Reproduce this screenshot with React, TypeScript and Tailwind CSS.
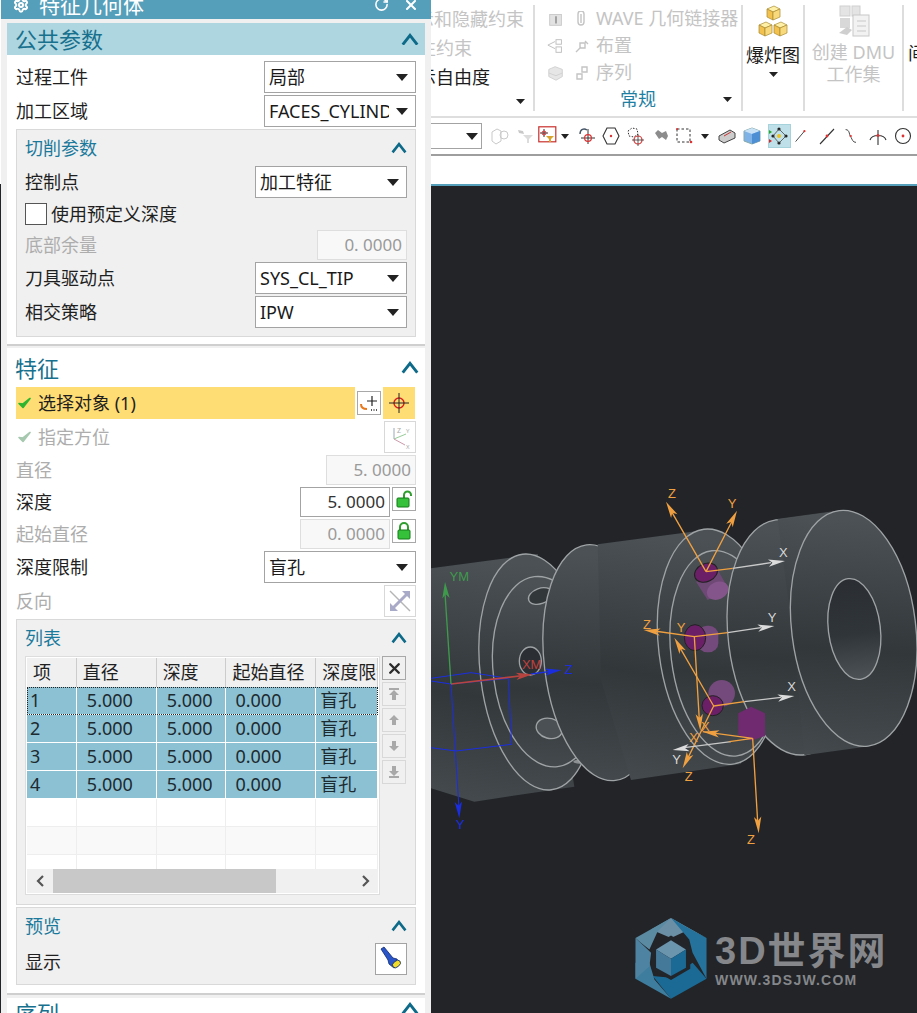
import React from "react";
import { Settings, RotateCw, X } from "lucide-react";

const Arrow = ({ c = "#222" }: { c?: string }) => (
  <svg width="12" height="7" viewBox="0 0 12 7" className="shrink-0"><polygon points="0,0 12,0 6,7" fill={c} /></svg>
);
const Chevron = ({ w = 18 }: { w?: number }) => (
  <svg width={w} height={w * 0.7} viewBox="0 0 18 13"><path d="M1.5 12 L9 2.5 L16.5 12" fill="none" stroke="#0d6a88" strokeWidth="3" /></svg>
);
const Select = ({ text, clip }: { text: string; clip?: boolean }) => (
  <div className="flex h-[32px] w-[152px] items-center justify-between border border-[#a3a3a3] bg-white pl-[4px] pr-[7px] text-[18px] text-[#1a1a1a]">
    <span className={clip ? "w-[120px] overflow-hidden whitespace-nowrap" : "whitespace-nowrap"}>{text}</span>
    <Arrow />
  </div>
);
const Num = ({ v, w, on }: { v: string; w: string; on?: boolean }) => (
  <div className={`flex h-[30px] items-center justify-end border pr-[4px] text-[17px] whitespace-nowrap ${w} ${on ? "border-[#a3a3a3] bg-white text-[#333]" : "border-[#dedede] bg-[#f8f8f8] text-[#9a9a9a]"}`}>{v}</div>
);
const Row = ({ label, dim, h = "h-[32px]", children }: { label: string; dim?: boolean; h?: string; children?: React.ReactNode }) => (
  <div className={`flex items-center justify-between ${h}`}>
    <span className={`text-[18px] ${dim ? "text-[#adadad]" : "text-[#1f1f1f]"}`}>{label}</span>
    {children}
  </div>
);
const Check = ({ c }: { c: string }) => (
  <svg width="13" height="12" viewBox="0 0 13 12"><path d="M1 6.5 L5 10.5 L12 1.5 L5 7 Z" fill={c} stroke={c} strokeWidth="1.6" strokeLinejoin="round" /></svg>
);
const Lock = ({ open }: { open?: boolean }) => (
  <svg width="16" height="18" viewBox="0 0 16 18">
    <path d={open ? "M8 8 V5 a3.5 3.5 0 0 1 7 0 V6" : "M4 8 V5 a4 4 0 0 1 8 0 V8"} fill="none" stroke="#2f9e2f" strokeWidth="2" />
    <rect x={open ? 1 : 2} y="8" width="12" height="9" rx="1" fill="#35c23a" stroke="#147a18" />
  </svg>
);
const Side = ({ d, dark }: { d?: string; dark?: boolean }) => (
  <div className={`flex h-[24px] w-[24px] items-center justify-center border ${dark ? "border-[#a8a8a8]" : "border-[#d8d8d8]"}`}>
    {dark ? <X size={17} strokeWidth={3.4} color="#2a2a2a" /> : <svg width="14" height="14" viewBox="0 0 14 14"><path d={d} fill="#a9a9a9" /></svg>}
  </div>
);

const cols = ["w-[50px]", "w-[80px]", "w-[70px]", "w-[90px]", "w-[62px]"];
const TableRow = ({ id, sel, first, alt }: { id?: string; sel?: boolean; first?: boolean; alt?: boolean }) => {
  const vals = id ? [id, "5.000", "5.000", "0.000", "盲孔"] : ["", "", "", "", ""];
  return (
    <div className={`flex h-[28px] shrink-0 border-b ${sel ? "border-white bg-[#8bc1d2] text-[#1d2a30]" : alt ? "border-[#eeeeee] bg-[#f9f9f9]" : "border-[#eeeeee] bg-white"} ${first ? "outline-1 outline-dotted outline-[#222] -outline-offset-1" : ""}`}>
      {vals.map((v, i) => (
        <div key={i} className={`flex items-center border-r text-[18px] ${sel ? "border-white" : "border-[#eeeeee]"} ${cols[i]} ${i === 0 ? "pl-[3px]" : i === 4 ? "pl-[4px]" : i === 3 ? "pl-[9px]" : "pl-[10px]"}`}>{v}</div>
      ))}
    </div>
  );
};

const Group = ({ title, children, cls }: { title: string; children: React.ReactNode; cls: string }) => (
  <div className={`flex flex-col border border-[#d9d9d9] bg-[#f0f0f0] pl-[8px] pr-[8px] ${cls}`}>
    <div className="flex h-[36px] shrink-0 items-center justify-between">
      <span className="text-[18px] text-[#1b7a9c]">{title}</span>
      <Chevron w={16} />
    </div>
    {children}
  </div>
);

const Panel = () => (
  <div className="flex h-[1013px] w-[430px] shrink-0 flex-col overflow-hidden bg-[#f0f0f0]">
    <div className="flex h-[19px] shrink-0 items-center justify-between overflow-hidden bg-[#569fba] pl-[12px] pr-[12px] text-white">
      <div className="-mt-[9px] flex items-center gap-[10px]">
        <Settings size={16} strokeWidth={3} />
        <span className="text-[21px] leading-[24px]">特征几何体</span>
      </div>
      <div className="-mt-[10px] flex items-center gap-[14px]">
        <RotateCw size={15} strokeWidth={2.5} />
        <X size={16} strokeWidth={3} />
      </div>
    </div>
    {/* section 1 */}
    <div className="ml-[6px] mt-[4px] h-[323px] w-[418px] shrink-0 border-b-2 border-[#cfcfcf] bg-white">
      <div className="flex h-[32px] items-center justify-between bg-[#aed6e0] pl-[8px] pr-[6px]">
        <span className="text-[22px] leading-none text-[#17708d]">公共参数</span>
        <Chevron />
      </div>
      <div className="flex flex-col gap-[2px] pl-[9px] pr-[9px] pt-[6px]">
        <Row label="过程工件"><Select text="局部" /></Row>
        <Row label="加工区域"><Select text="FACES_CYLINDER" clip /></Row>
        <Group title="切削参数" cls="h-[208px]">
          <div className="flex flex-col">
            <Row label="控制点"><Select text="加工特征" /></Row>
            <div className="flex h-[32px] items-center gap-[4px]">
              <div className="h-[22px] w-[22px] border border-[#555] bg-white" />
              <span className="text-[18px] text-[#1f1f1f]">使用预定义深度</span>
            </div>
            <Row label="底部余量" dim h="h-[30px]"><Num v="0. 0000" w="w-[90px]" /></Row>
            <div className="mt-[2px]"><Row label="刀具驱动点"><Select text="SYS_CL_TIP" /></Row></div>
            <div className="mt-[2px]"><Row label="相交策略"><Select text="IPW" /></Row></div>
          </div>
        </Group>
      </div>
    </div>
    {/* section 2 */}
    <div className="ml-[6px] mt-[2px] h-[647px] w-[418px] shrink-0 border-b-2 border-[#cfcfcf] bg-white">
      <div className="flex h-[39px] items-center justify-between pl-[8px] pr-[6px]">
        <span className="text-[22px] leading-none text-[#17708d]">特征</span>
        <Chevron />
      </div>
      <div className="flex flex-col gap-[2px] pl-[9px] pr-[9px]">
        <div className="flex h-[32px] items-center">
          <div className="flex h-[32px] w-[339px] items-center gap-[7px] bg-[#ffdd75] pl-[2px] text-[18px] text-[#1f1f1f]">
            <Check c="#2fb52f" />
            <span>选择对象 (1)</span>
          </div>
          <div className="ml-[2px] flex h-[24px] w-[24px] items-center justify-center border border-[#a8a8a8] bg-white">
            <svg width="20" height="20" viewBox="0 0 20 20"><path d="M13 3v10M8 8h10" stroke="#222" strokeWidth="1.2" /><path d="M2 11c0 4 3 5 6 5" fill="none" stroke="#e8791e" strokeWidth="2" /><path d="M12 17h1M14.5 17h1M17 17h1" stroke="#222" strokeWidth="1.6" /></svg>
          </div>
          <div className="ml-[2px] flex h-[32px] w-[32px] items-center justify-center bg-[#ffdd75]">
            <svg width="20" height="20" viewBox="0 0 20 20"><circle cx="10" cy="10" r="5" fill="none" stroke="#d81e1e" strokeWidth="1.4" /><path d="M10 0v20M0 10h20" stroke="#222" strokeWidth="1" /></svg>
          </div>
        </div>
        <div className="flex h-[32px] items-center justify-between">
          <div className="flex items-center gap-[7px] pl-[2px] text-[18px] text-[#adadad]"><Check c="#a6c8ae" /><span>指定方位</span></div>
          <div className="flex h-[32px] w-[32px] items-center justify-center border border-[#d8d8d8] bg-white">
            <svg width="24" height="24" viewBox="0 0 24 24" fill="none" strokeWidth="1"><path d="M6 14V3" stroke="#9ab" /><path d="M6 14l12-5" stroke="#9c9" /><path d="M6 14l11 6" stroke="#c9a" /><text x="9" y="8" fontSize="7" fill="#aaa" stroke="none">Z</text><text x="18" y="8" fontSize="6" fill="#aaa" stroke="none">Y</text><text x="18" y="24" fontSize="6" fill="#aaa" stroke="none">X</text></svg>
          </div>
        </div>
        <Row label="直径" dim h="h-[30px]"><Num v="5. 0000" w="w-[90px]" /></Row>
        <Row label="深度" h="h-[30px]">
          <div className="flex items-start gap-[2px]">
            <Num v="5. 0000" w="w-[90px]" on />
            <div className="flex h-[24px] w-[24px] items-center justify-center border border-[#a8a8a8]"><Lock open /></div>
          </div>
        </Row>
        <Row label="起始直径" dim h="h-[30px]">
          <div className="flex items-start gap-[2px]">
            <Num v="0. 0000" w="w-[90px]" />
            <div className="flex h-[24px] w-[24px] items-center justify-center border border-[#a8a8a8]"><Lock /></div>
          </div>
        </Row>
        <Row label="深度限制"><Select text="盲孔" /></Row>
        <Row label="反向" dim>
          <div className="flex h-[32px] w-[32px] items-center justify-center border border-[#d8d8d8]">
            <svg width="26" height="26" viewBox="0 0 26 26" fill="none"><path d="M3 3L23 23" stroke="#b5b5b5" strokeWidth="1.5" /><path d="M5 21L21 5" stroke="#a9a9c8" strokeWidth="3" /><path d="M15 3h8v8zM3 15v8h8z" fill="#a9a9c8" /></svg>
          </div>
        </Row>
        <Group title="列表" cls="h-[286px]">
          <div className="flex gap-[2px]">
            <div className="flex h-[239px] w-[355px] flex-col border border-[#dddddd] bg-white p-px">
              <div className="flex h-[29px] shrink-0 bg-[#f0f0f0]">
                {["项", "直径", "深度", "起始直径", "深度限制"].map((t, i) => (
                  <div key={t} className={`flex items-center overflow-hidden whitespace-nowrap border-r border-[#cccccc] pl-[6px] text-[18px] text-[#1f1f1f] ${cols[i]}`}>{t}</div>
                ))}
              </div>
              <div className="flex h-[183px] flex-col overflow-hidden">
                <TableRow id="1" sel first />
                <TableRow id="2" sel />
                <TableRow id="3" sel />
                <TableRow id="4" sel />
                <TableRow />
                <TableRow alt />
                <TableRow />
              </div>
              <div className="flex h-[24px] shrink-0 items-center bg-[#f0f0f0]">
                <div className="flex w-[26px] justify-center"><svg width="10" height="12" viewBox="0 0 10 12"><path d="M8 1L3 6l5 5" fill="none" stroke="#555" strokeWidth="2.2" /></svg></div>
                <div className="h-[24px] w-[223px] bg-[#c8c8c8]" />
                <div className="flex flex-1 justify-end pr-[7px]"><svg width="10" height="12" viewBox="0 0 10 12"><path d="M2 1l5 5-5 5" fill="none" stroke="#555" strokeWidth="2.2" /></svg></div>
              </div>
            </div>
            <div className="flex flex-col gap-[2px]">
              <Side dark />
              <Side d="M2 1h10v2H2zM7 3l5 5H9v5H5V8H2z" />
              <Side d="M7 2l5 5H9v5H5V7H2z" />
              <Side d="M5 2h4v5h3l-5 5-5-5h3z" />
              <Side d="M5 1h4v5h3l-5 5-5-5h3zM2 11h10v2H2z" />
            </div>
          </div>
        </Group>
        <Group title="预览" cls="h-[78px]">
          <div className="-mt-[1px] flex items-start justify-between">
            <span className="mt-[6px] text-[18px] text-[#1f1f1f]">显示</span>
            <div className="flex h-[32px] w-[32px] items-center justify-center border border-[#a3a3a3] bg-white">
              <svg width="24" height="26" viewBox="0 0 24 26"><path d="M2 3l3-2 9 11 4 1 2 6-5 3-5-4-1-4z" fill="#2a55c8" stroke="#102a70" strokeWidth=".8" /><ellipse cx="17.5" cy="18" rx="4.5" ry="3" transform="rotate(-40 17.5 18)" fill="#f2dc2a" stroke="#102a70" strokeWidth=".8" /></svg>
            </div>
          </div>
        </Group>
      </div>
    </div>
    {/* section 3 */}
    <div className="ml-[6px] mt-[3px] flex h-[40px] w-[418px] shrink-0 items-start justify-between bg-white pl-[8px] pr-[6px] pt-[4px]">
      <span className="text-[22px] leading-[22px] text-[#17708d]">序列</span>
      <Chevron />
    </div>
  </div>
);

const G = ({ children, w = 20 }: { children: React.ReactNode; w?: number }) => (
  <svg width={w} height={20} viewBox="0 0 20 20" fill="none" className="shrink-0">{children}</svg>
);
const Cube = () => (
  <svg width="15" height="16" viewBox="0 0 15 16"><path d="M1 4l7-3 6 3-7 3z" fill="#fff0a8" stroke="#a88a30" strokeWidth=".7" /><path d="M1 4l6 3v8l-6-3z" fill="#f2c14e" stroke="#a88a30" strokeWidth=".7" /><path d="M7 7l7-3v8l-7 3z" fill="#f8da7c" stroke="#a88a30" strokeWidth=".7" /></svg>
);

const Slot = ({ w, children }: { w: string; children?: React.ReactNode }) => (
  <div className={`flex h-[28px] shrink-0 items-center justify-center ${w}`}>{children}</div>
);

const Toolbar = () => (
  <div className="flex h-[40px] shrink-0 items-center border-b-2 border-t-2 border-b-[#9e9e9e] border-t-[#dedede] bg-white">
    <div className="flex h-[26px] w-[51px] shrink-0 items-center justify-end border border-l-0 border-[#a3a3a3] pr-[3px]"><Arrow /></div>
    <div className="w-[6px] shrink-0" />
    <Slot w="w-[24px]"><G><path d="M2 6l5-3 4 2v10l-5 3-4-3z" stroke="#c9c9c9" /><circle cx="14" cy="9" r="4" stroke="#c9c9c9" /></G></Slot>
    <Slot w="w-[26px]"><G><path d="M3 4l5 1 1 3-5-1z" fill="#c8c8c8" /><path d="M8 9h10l-4 4v4h-2v-4z" fill="#dcdcdc" /></G></Slot>
    <Slot w="w-[20px]"><G><rect x=".8" y=".8" width="17" height="15" stroke="#c9302c" strokeWidth="1.2" /><path d="M6 3v8M2 7h8" stroke="#333" /><circle cx="6" cy="7" r="2" stroke="#d33" /><path d="M8 10h8l-3 3v3h-2v-3z" fill="#d9a42b" /></G></Slot>
    <Slot w="w-[14px]"><svg width="8" height="5" viewBox="0 0 8 5"><polygon points="0,0 8,0 4,5" fill="#222" /></svg></Slot>
    <Slot w="w-[30px]"><G><path d="M11 3v15M4 12h14" stroke="#333" /><circle cx="11" cy="12" r="3.4" stroke="#d33" strokeWidth="1.2" /><path d="M3 8C3 3 7 2 10 4" stroke="#456" strokeWidth="1.4" /></G></Slot>
    <Slot w="w-[18px]"><G><path d="M6 2h8l4 8-4 8H6l-4-8z" stroke="#333" strokeWidth="1.1" /><circle cx="10" cy="10" r="1.2" fill="#d33" /></G></Slot>
    <Slot w="w-[30px]"><G><path d="M3 5l4-3 5 1 1 5-4 3-5-1z" stroke="#333" strokeDasharray="1.5 1.5" /><circle cx="13" cy="14" r="4" stroke="#d33" strokeWidth="1.2" /><path d="M13 8v12M7 14h12" stroke="#333" strokeWidth=".8" /></G></Slot>
    <Slot w="w-[24px]"><G><path d="M3 7l3-3 4 3 4-2 2 5-2 4-4-3-3 2z" fill="#8c8c8c" /></G></Slot>
    <Slot w="w-[22px]"><G><rect x="2" y="3" width="13" height="13" stroke="#333" strokeDasharray="2.5 2" /><circle cx="2" cy="3" r="1" fill="#d33" /><circle cx="16" cy="16" r="1.3" fill="#d33" /></G></Slot>
    <Slot w="w-[18px]"><svg width="8" height="5" viewBox="0 0 8 5"><polygon points="0,0 8,0 4,5" fill="#222" /></svg></Slot>
    <Slot w="w-[26px]"><G><path d="M2 10l11-6 5 3v5l-11 5-5-3z" fill="#ccc" stroke="#444" /><path d="M7 10l7-4" stroke="#c33" /></G></Slot>
    <Slot w="w-[24px]"><G><path d="M2 5l8-3 8 3v10l-8 3-8-3z" fill="#7fb2e6" stroke="#8aa" /><path d="M2 5l8 3 8-3-8-3z" fill="#c9e2f6" /><path d="M10 8v10l8-3V5z" fill="#4e8fd4" /></G></Slot>
    <div className="flex h-[28px] w-[30px] shrink-0 items-center justify-center">
      <div className="flex h-[24px] w-[23px] items-center justify-center border border-[#a6d2dc] bg-[#bfe0e8]">
        <G><circle cx="10" cy="10" r="2" fill="#f0c020" /><circle cx="10" cy="3" r="1.6" fill="#222" /><circle cx="10" cy="17" r="1.6" fill="#222" /><circle cx="17" cy="10" r="1.6" fill="#222" /><circle cx="4" cy="10" r="1.6" fill="#222" /><path d="M10 3l7 7-7 7-6-7z" stroke="#333" strokeWidth=".7" /><path d="M0 4l3 2-3 2z" fill="#2a2" /><path d="M0 13l3 2-3 2z" fill="#d22" /></G>
      </div>
    </div>
    <Slot w="w-[16px]"><G w={16}><path d="M2 17L13 4" stroke="#333" strokeWidth="1.1" /><circle cx="13" cy="4" r="1.4" fill="#d33" /></G></Slot>
    <Slot w="w-[34px]"><G><path d="M3 18L17 3" stroke="#333" strokeWidth="1.1" /><circle cx="10" cy="10" r="1.4" fill="#d33" /></G></Slot>
    <Slot w="w-[16px]"><G w={16}><path d="M2 2c6 0 4 8 7 10 1 2 2 6 6 6" stroke="#333" strokeWidth="1.1" /><circle cx="8.5" cy="10" r="1.4" fill="#d33" /></G></Slot>
    <Slot w="w-[36px]"><G><path d="M2 14C4 8 16 8 18 14M10 4v15" stroke="#333" strokeWidth="1.1" /><circle cx="10" cy="9.5" r="1.4" fill="#d33" /></G></Slot>
    <Slot w="w-[14px]"><G><circle cx="10" cy="10" r="7.5" stroke="#333" strokeWidth="1.1" /><circle cx="10" cy="10" r="1.4" fill="#d33" /></G></Slot>
  </div>
);

const RibbonIcon = ({ i }: { i: number }) => (
  <G w={18}>
    {i === 0 && <><rect x="3" y="5" width="13" height="12" fill="#e2e2e2" stroke="#c8c8c8" /><path d="M9 7h2v8H9z" fill="#9c9c9c" /></>}
    {i === 1 && <><path d="M1 9l8-4M1 9l8 4" stroke="#bbb" /><rect x="10" y="3" width="6" height="5" stroke="#bbb" /><rect x="10" y="11" width="6" height="6" stroke="#bbb" /></>}
    {i === 2 && <><path d="M2 6l7-3 8 3v8l-7 4-8-4z" fill="#e6e6e6" stroke="#cfcfcf" /><path d="M2 10l8 3 7-3" stroke="#cfcfcf" /></>}
  </G>
);

const Ribbon = () => (
  <div className="flex h-[116px] shrink-0 bg-white pt-[5px] text-[18px]">
    <div className="flex h-[106px] w-[104px] shrink-0 flex-col overflow-hidden border-r-2 border-[#dddddd]">
      <div className="flex h-[29px] -ml-[15px] items-center whitespace-nowrap text-[#c4c4c4]">示和隐藏约束</div>
      <div className="flex h-[29px] -ml-[13px] items-center whitespace-nowrap text-[#c4c4c4]">性约束</div>
      <div className="flex h-[29px] -ml-[13px] items-center whitespace-nowrap text-[#1c1c1c]">示自由度</div>
      <div className="flex flex-1 items-center justify-end pr-[8px]"><svg width="9" height="5" viewBox="0 0 9 5"><polygon points="0,0 9,0 4.5,5" fill="#222" /></svg></div>
    </div>
    <div className="flex h-[106px] w-[208px] shrink-0 flex-col border-r-2 border-[#dddddd]">
      {[
        ["WAVE 几何链接器", 0],
        ["布置", 1],
        ["序列", 2],
      ].map(([t, i]) => (
        <div key={t as string} className="flex h-[29px] items-center whitespace-nowrap pl-[12px] text-[#c4c4c4]">
          <RibbonIcon i={i as number} />
          <div className="ml-[9px] mr-[6px] flex w-[16px] justify-center">
            <svg width="16" height="16" viewBox="0 0 16 16" fill="none" stroke="#c4c4c4" strokeWidth="1.4">
              {i === 0 && <path d="M4 3a3 3 0 0 1 6 0v8a3 3 0 0 1-6 0zM7 3v9" />}
              {i === 1 && <path d="M2 14l5-5M6 5h5v5H6zM11 3l3 3" />}
              {i === 2 && <path d="M3 9h5v5H3zM8 2h5v5H8z" />}
            </svg>
          </div>
          <span>{t as string}</span>
        </div>
      ))}
      <div className="relative flex flex-1 items-center justify-center text-[#1f7fa3]">
        常规
        <svg className="absolute right-[9px] top-[11px]" width="9" height="5" viewBox="0 0 9 5"><polygon points="0,0 9,0 4.5,5" fill="#222" /></svg>
      </div>
    </div>
    <div className="flex h-[106px] w-[62px] shrink-0 flex-col items-center border-r-2 border-[#dddddd] text-[#1c1c1c]">
      <div className="flex flex-col items-center">
        <Cube />
        <div className="flex"><Cube /><Cube /></div>
      </div>
      <div className="mt-[6px] leading-[24px]">爆炸图</div>
      <svg className="mt-[5px]" width="9" height="5" viewBox="0 0 9 5"><polygon points="0,0 9,0 4.5,5" fill="#222" /></svg>
    </div>
    <div className="flex h-[106px] w-[99px] shrink-0 flex-col items-center border-r-2 border-[#dddddd] text-[#c4c4c4]">
      <svg width="32" height="32" viewBox="0 0 32 32" fill="none"><rect x="2" y="1" width="10" height="10" fill="#e4e4e4" stroke="#cfcfcf" /><rect x="14" y="1" width="8" height="10" fill="#e4e4e4" stroke="#cfcfcf" /><rect x="2" y="13" width="10" height="10" fill="#d8d8d8" /><rect x="15" y="10" width="16" height="21" fill="#f2f2f2" stroke="#c8c8c8" /><path d="M19 16h9M19 21h9M19 26h9" stroke="#c8c8c8" /><path d="M1 28l8-6 5 3-5 5z" fill="#cfcfcf" /></svg>
      <div className="mt-[4px] leading-[22px]">创建 DMU</div>
      <div className="leading-[22px]">工作集</div>
    </div>
    <div className="mt-[36px] ml-[4px] w-[10px] overflow-hidden whitespace-nowrap leading-[24px] text-[#1c1c1c]">间隙</div>
  </div>
);

const lbl = "font-['Liberation_Sans',sans-serif]";
const Txt = ({ x, y, c, t }: { x: number; y: number; c: string; t: string }) => (
  <text x={x} y={y} fill={c} fontSize="39" textAnchor="middle" className={lbl}>{t}</text>
);
const Axis = ({ d, c, w = 4 }: { d: string; c: string; w?: number }) => <path d={d} stroke={c} strokeWidth={w} fill="none" />;
const Head = ({ x, y, tx, ty, c }: { x: number; y: number; tx: number; ty: number; c: string }) => {
  const a = Math.atan2(ty - y, tx - x);
  const p = (r: number, s: number) => `${x + Math.cos(a) * r - Math.sin(a) * s},${y + Math.sin(a) * r + Math.cos(a) * s}`;
  return <polygon points={`${p(0, 0)} ${p(50, 11)} ${p(38, 0)} ${p(50, -11)}`} fill={c} />;
};

const OR = "#f0a040";
const ST = "#9fa3a5";
const Scene = () => (
  <svg width="487" height="827" viewBox="0 -882 1461 2481" className="block">
    <defs>
      <linearGradient id="b" x1="0.1" y1="0" x2="0" y2="1">
        <stop offset="0" stopColor="#4b5155" />
        <stop offset="0.55" stopColor="#32373a" />
        <stop offset="1" stopColor="#454b4e" />
      </linearGradient>
      <linearGradient id="h" x1="0" y1="0" x2="0" y2="1">
        <stop offset="0" stopColor="#2a2e32" />
        <stop offset="0.55" stopColor="#30353a" />
        <stop offset="1" stopColor="#4c5255" />
      </linearGradient>
    </defs>
    {/* left shaft */}
    <polygon points="0,265 320,222 430,920 130,965 0,925" fill="url(#b)" />
    {/* flange 1 */}
    <ellipse cx="318" cy="576" rx="170" ry="356" transform="rotate(-7 318 576)" fill="url(#b)" stroke={ST} strokeWidth="4" />
    <ellipse cx="345" cy="575" rx="158" ry="287" transform="rotate(-7 345 575)" fill="url(#b)" stroke={ST} strokeWidth="4" />
    <ellipse cx="328" cy="348" rx="37" ry="23" transform="rotate(-20 328 348)" fill="#32373a" stroke={ST} strokeWidth="4" />
    <ellipse cx="298" cy="543" rx="33" ry="42" fill="#2b2f33" stroke={ST} strokeWidth="4" />
    <ellipse cx="355" cy="745" rx="40" ry="30" transform="rotate(15 355 745)" fill="#4a5053" stroke={ST} strokeWidth="4" />
    <ellipse cx="445" cy="845" rx="18" ry="6" fill="#8c9092" />
    {/* cylinder 2 */}
    <ellipse cx="510" cy="548" rx="170" ry="356" transform="rotate(-7 510 548)" fill="url(#b)" stroke={ST} strokeWidth="4" />
    <polygon points="500,193 840,148 930,852 600,900 510,600" fill="url(#b)" />
    {/* flange 2 */}
    <ellipse cx="862" cy="500" rx="179" ry="355" transform="rotate(-7 862 500)" fill="url(#b)" stroke={ST} strokeWidth="4" />
    <ellipse cx="880" cy="520" rx="160" ry="310" transform="rotate(-7 880 520)" fill="url(#b)" stroke={ST} strokeWidth="4" />
    {/* purple bodies */}
    <polygon points="795,305 860,270 892,325 830,360" fill="#75497c" opacity=".85" />
    <ellipse cx="860" cy="332" rx="34" ry="26" transform="rotate(-25 860 332)" fill="#84558a" />
    <ellipse cx="825" cy="278" rx="36" ry="27" transform="rotate(-25 825 278)" fill="#6a1f66" stroke="#222" strokeWidth="3" />
    <rect x="800" y="437" width="62" height="80" rx="28" fill="#74497b" />
    <ellipse cx="792" cy="473" rx="32" ry="39" fill="#6a1f66" stroke="#222" strokeWidth="3" />
    <ellipse cx="872" cy="640" rx="40" ry="40" fill="#74497b" />
    <ellipse cx="845" cy="677" rx="32" ry="30" fill="#6a1f66" stroke="#222" strokeWidth="3" />
    {/* cylinder 3 */}
    <ellipse cx="1078" cy="472" rx="186" ry="355" transform="rotate(-7 1078 472)" fill="url(#b)" stroke={ST} strokeWidth="4" />
    <polygon points="1040,118 1230,92 1320,798 1120,826 1090,500" fill="url(#b)" />
    <path d="M1040 118 L1230 92" stroke="#565b5e" strokeWidth="2" />
    <polygon points="922,700 960,680 1002,700 1002,768 960,782 922,765" fill="#6f2a70" />
    <ellipse cx="1268" cy="445" rx="186" ry="356" transform="rotate(-7 1268 445)" fill="url(#b)" stroke={ST} strokeWidth="4" />
    <ellipse cx="1270" cy="447" rx="78" ry="152" transform="rotate(-7 1270 447)" fill="url(#h)" stroke={ST} strokeWidth="4" />
    {/* WCS */}
    <Axis d="M0 595 L120 578 L232 595 L60 612 L0 603 M232 595 L242 793 L75 813 L0 803 M60 612 L85 1000" c="#1a2ee0" w={3} />
    <Head x={85} y={1015} tx={60} ty={612} c="#1a2ee0" />
    <Axis d="M300 582 L360 574" c="#1a2ee0" />
    <Head x={392} y={570} tx={60} ty={612} c="#1a2ee0" />
    <Axis d="M60 612 L290 585" c="#b8443f" w={5} />
    <Head x={305} y={583} tx={60} ty={612} c="#b8443f" />
    <Axis d="M60 612 L42 340" c="#3f9a4c" />
    <Head x={42} y={305} tx={60} ty={612} c="#3f9a4c" />
    <Txt x={85} y={302} c="#3f9a4c" t="YM" />
    <Txt x={302} y={567} c="#c0403c" t="XM" />
    <Txt x={413} y={581} c="#1a2ee0" t="Z" />
    <Txt x={87} y={1047} c="#1a2ee0" t="Y" />
    {/* triad 1 */}
    <Axis d="M905 265 L1020 248" c="#c9c9c9" /><Head x={1062} y={243} tx={825} ty={275} c="#dcdcdc" />
    <Axis d="M825 275 L720 92 M825 275 L905 120 M825 275 L905 265" c={OR} />
    <Head x={705} y={65} tx={825} ty={275} c={OR} /><Head x={918} y={92} tx={825} ty={275} c={OR} />
    <Txt x={723} y={54} c={OR} t="Z" /><Txt x={903} y={84} c={OR} t="Y" /><Txt x={1057} y={230} c="#d8d8d8" t="X" />
    {/* triad 2 */}
    <Axis d="M890 458 L990 443" c="#c9c9c9" /><Head x={1030} y={438} tx={790} ty={470} c="#dcdcdc" />
    <Axis d="M790 470 L670 453 M790 470 L890 458 M790 470 L805 720" c={OR} />
    <Head x={638} y={450} tx={790} ty={470} c={OR} /><Head x={808} y={752} tx={790} ty={470} c={OR} />
    <Txt x={648} y={447} c={OR} t="Z" /><Txt x={750} y={457} c={OR} t="Y" /><Txt x={1023} y={425} c="#d8d8d8" t="Y" />
    {/* triad 3 */}
    <Axis d="M940 665 L1050 652" c="#c9c9c9" /><Head x={1090} y={648} tx={848} ty={678} c="#dcdcdc" />
    <Axis d="M848 678 L745 500 M848 678 L940 665 M848 678 L770 835" c={OR} />
    <Head x={730} y={473} tx={848} ty={678} c={OR} /><Head x={755} y={865} tx={848} ty={678} c={OR} />
    <Txt x={1082} y={634} c="#d8d8d8" t="X" /><Txt x={773} y={902} c={OR} t="Z" />
    {/* triad 4 */}
    <Axis d="M900 785 L760 803" c="#c9c9c9" /><Head x={725} y={810} tx={965} ty={775} c="#dcdcdc" />
    <Axis d="M965 775 L815 755 M965 775 L895 785 M965 775 L980 1025" c={OR} />
    <Head x={983} y={1060} tx={965} ty={775} c={OR} /><Head x={815} y={755} tx={965} ty={775} c={OR} />
    <Txt x={737} y={852} c="#d8d8d8" t="Y" /><Txt x={960} y={1092} c={OR} t="Z" /><Txt x={788} y={786} c={OR} t="X" /><Txt x={823} y={752} c={OR} t="X" />
  </svg>
);

const Logo = () => (
  <div className="absolute left-[203px] top-[731px] flex items-center gap-[7px]">
    <svg width="74" height="83" viewBox="40 52 220 250">
      <polygon points="150,55 257,115 205,90 150,115 90,90" fill="#6b90a5" />
      <polygon points="150,55 190,78 257,115 257,238 215,160 205,120" fill="#25739c" />
      <polygon points="257,238 150,298 95,230 150,235 215,190" fill="#1a6a95" />
      <polygon points="150,298 43,238 43,190 85,190 100,240" fill="#3f7d9e" />
      <polygon points="43,238 43,115 90,160 85,200" fill="#4e84a2" />
      <polygon points="43,115 150,55 110,95 85,150 60,130" fill="#5b8aa3" />
      <polygon points="150,108 208,142 208,208 150,242 92,208 92,142" fill="#22252a" />
      <polygon points="150,122 195,150 150,178 105,150" fill="#6b94ad" />
      <polygon points="105,150 150,178 150,230 105,205" fill="#44799a" />
      <polygon points="195,150 150,178 150,230 195,205" fill="#1b6a96" />
    </svg>
    <div className="flex flex-col">
      <div className="whitespace-nowrap font-['Liberation_Sans','Noto_Sans_CJK_SC',sans-serif] text-[38px] font-bold leading-[42px] tracking-[2px] text-[#85878a]">3D世界网</div>
      <div className="mt-[1px] whitespace-nowrap font-['Liberation_Sans',sans-serif] text-[14px] font-bold leading-[14px] tracking-[1.2px] text-[#85878a]">WWW.3DSJW.COM</div>
    </div>
  </div>
);

export default function App() {
  return (
    <div className="flex h-[1013px] w-[917px] overflow-hidden bg-white font-['Noto_Sans','Noto_Sans_CJK_SC',sans-serif]">
      <div className="flex w-px shrink-0 flex-col">
        <div className="h-[184px] bg-white" />
        <div className="flex-1 bg-[#222428]" />
      </div>
      <Panel />
      <div className="flex min-w-0 flex-1 flex-col overflow-hidden">
        <Ribbon />
        <Toolbar />
        <div className="h-[28px] shrink-0 bg-white" />
        <div className="relative flex-1 border-t-2 border-[#569fba] bg-[#222428]">
          <Scene />
          <Logo />
        </div>
      </div>
    </div>
  );
}
